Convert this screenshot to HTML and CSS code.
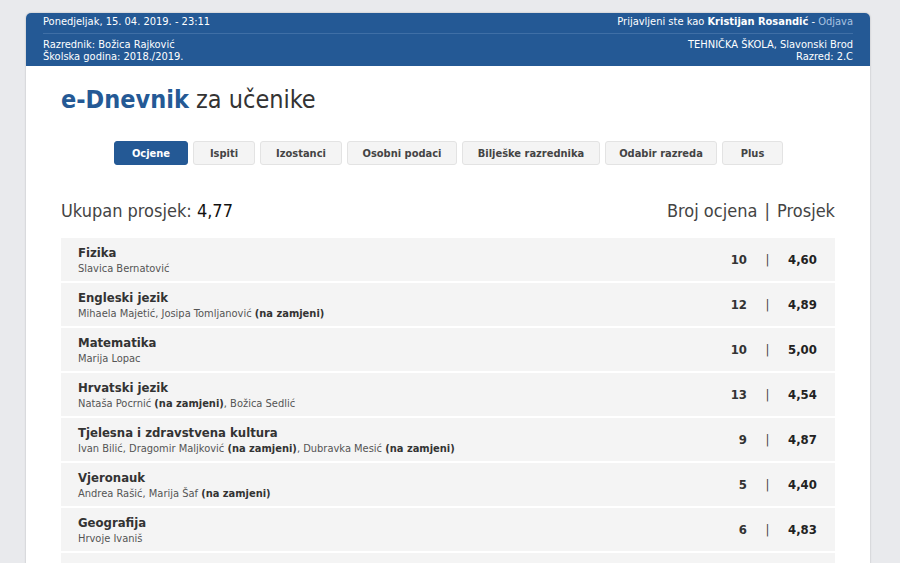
FILE: index.html
```html
<!DOCTYPE html>
<html lang="hr">
<head>
<meta charset="utf-8">
<title>e-Dnevnik za učenike</title>
<link rel="stylesheet" href="styles.css">
</head>
<body>
<div class="page">
  <header class="header">
    <div class="header-top">
      <span>Ponedjeljak, 15. 04. 2019. - 23:11</span>
      <span>Prijavljeni ste kao <b>Kristijan Rosandić</b> - <a class="logout" href="#">Odjava</a></span>
    </div>
    <div class="header-bottom">
      <div>Razrednik: Božica Rajković<br>Školska godina: 2018./2019.</div>
      <div class="right">TEHNIČKA ŠKOLA, Slavonski Brod<br>Razred: 2.C</div>
    </div>
  </header>
  <main class="content">
    <h1 class="logo"><span class="brand">e-Dnevnik</span> za učenike</h1>
    <nav class="tabs">
      <a class="tab active" href="#">Ocjene</a>
      <a class="tab" href="#">Ispiti</a>
      <a class="tab" href="#">Izostanci</a>
      <a class="tab" href="#">Osobni podaci</a>
      <a class="tab" href="#">Bilješke razrednika</a>
      <a class="tab" href="#">Odabir razreda</a>
      <a class="tab" href="#">Plus</a>
    </nav>
    <div class="summary">
      <div>Ukupan prosjek: <span class="dark">4,77</span></div>
      <div>Broj ocjena <span class="bar">|</span> Prosjek</div>
    </div>
    <div class="list">
      <div class="row"><div><div class="subj">Fizika</div><div class="teach">Slavica Bernatović</div></div><div class="nums"><span class="cnt">10</span><span class="sep">|</span><span class="avg">4,60</span></div></div>
      <div class="row"><div><div class="subj">Engleski jezik</div><div class="teach">Mihaela Majetić, Josipa Tomljanović <b>(na zamjeni)</b></div></div><div class="nums"><span class="cnt">12</span><span class="sep">|</span><span class="avg">4,89</span></div></div>
      <div class="row"><div><div class="subj">Matematika</div><div class="teach">Marija Lopac</div></div><div class="nums"><span class="cnt">10</span><span class="sep">|</span><span class="avg">5,00</span></div></div>
      <div class="row"><div><div class="subj">Hrvatski jezik</div><div class="teach">Nataša Pocrnić <b>(na zamjeni)</b>, Božica Sedlić</div></div><div class="nums"><span class="cnt">13</span><span class="sep">|</span><span class="avg">4,54</span></div></div>
      <div class="row"><div><div class="subj">Tjelesna i zdravstvena kultura</div><div class="teach">Ivan Bilić, Dragomir Maljković <b>(na zamjeni)</b>, Dubravka Mesić <b>(na zamjeni)</b></div></div><div class="nums"><span class="cnt">9</span><span class="sep">|</span><span class="avg">4,87</span></div></div>
      <div class="row"><div><div class="subj">Vjeronauk</div><div class="teach">Andrea Rašić, Marija Šaf <b>(na zamjeni)</b></div></div><div class="nums"><span class="cnt">5</span><span class="sep">|</span><span class="avg">4,40</span></div></div>
      <div class="row"><div><div class="subj">Geografija</div><div class="teach">Hrvoje Ivaniš</div></div><div class="nums"><span class="cnt">6</span><span class="sep">|</span><span class="avg">4,83</span></div></div>
      <div class="row"></div>
    </div>
  </main>
</div>
</body>
</html>
```
FILE: styles.css
```css
* { box-sizing: border-box; }
html, body { margin: 0; padding: 0; }
body {
  background: #e9eaed;
  font-family: "DejaVu Sans Condensed", "DejaVu Sans", sans-serif;
  color: #333;
  overflow: hidden;
}
.page {
  width: 844px;
  margin: 13px 0 0 26px;
  background: #fff;
  border-radius: 5px 5px 0 0;
  box-shadow: 0 0 2px rgba(0,0,0,0.25);
  min-height: 600px;
}
.header {
  background: #245995;
  color: #fff;
  border-radius: 5px 5px 0 0;
  padding: 0 17px;
  font-size: 11px;
  line-height: 12px;
}
.header-top {
  display: flex;
  justify-content: space-between;
  height: 21px;
  padding-top: 3px;
  border-bottom: 1px solid #3f6fa6;
}
.header-top b { font-weight: bold; }
.logout { color: #aac4e2; text-decoration: none; }
.header-bottom {
  display: flex;
  justify-content: space-between;
  padding: 5px 0 3px;
  height: 32px;
}
.header-bottom .right { text-align: right; }
.content { padding: 0 35px; }
.logo {
  margin: 0;
  padding: 19px 0 0;
  height: 75px;
  font-size: 25px;
  font-weight: normal;
  color: #333;
  line-height: 30px;
}
.brand { color: #245995; font-weight: bold; }
.tabs {
  display: flex;
  justify-content: center;
  gap: 5px;
  height: 24px;
  padding-left: 1px;
}
.tab {
  display: flex;
  align-items: center;
  justify-content: center;
  background: #f4f4f4;
  border: 1px solid #e3e3e3;
  border-radius: 3px;
  color: #444;
  text-decoration: none;
  font-size: 11px;
  font-weight: bold;
}
.tab:nth-child(1) { width: 74px; }
.tab:nth-child(2) { width: 62px; }
.tab:nth-child(3) { width: 82px; }
.tab:nth-child(4) { width: 110px; }
.tab:nth-child(5) { width: 138px; }
.tab:nth-child(6) { width: 112px; }
.tab:nth-child(7) { width: 61px; }
.tab.active {
  background: #245995;
  border-color: #245995;
  color: #fff;
}
.summary {
  display: flex;
  justify-content: space-between;
  margin-top: 36px;
  height: 37px;
  font-size: 18px;
  line-height: 20px;
  color: #444;
}
.summary .dark { color: #111; }
.summary .bar { margin: 0 2px; }
.list { display: flex; flex-direction: column; gap: 2px; }
.row {
  display: flex;
  justify-content: space-between;
  align-items: center;
  height: 43px;
  background: #f4f4f4;
  padding: 0 19px 0 17px;
}
.subj { font-size: 13px; font-weight: bold; color: #333; line-height: 17px; }
.teach { font-size: 11px; color: #555; line-height: 15px; }
.teach b { color: #333; }
.nums { display: flex; align-items: center; font-size: 13px; color: #222; }
.cnt { width: 30px; text-align: right; font-weight: bold; color: #333; }
.sep { width: 41px; text-align: center; color: #444; }
.avg { font-weight: bold; width: 28px; text-align: right; }
```
